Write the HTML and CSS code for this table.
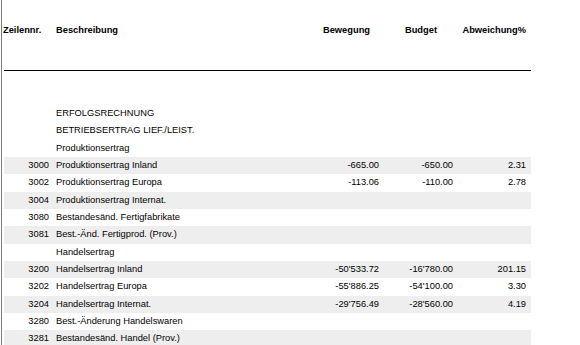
FILE: index.html
```html
<!DOCTYPE html>
<html>
<head>
<meta charset="utf-8">
<link rel="stylesheet" href="styles.css">
</head>
<body>
<div class="page">
  <div class="head">
    <div class="h-num">Zeilennr.</div>
    <div class="h-desc">Beschreibung</div>
    <div class="h-mov">Bewegung</div>
    <div class="h-bud">Budget</div>
    <div class="h-dev">Abweichung%</div>
  </div>
  <div class="rule"></div>
  <div class="rows">
    <div class="row"><span class="num"></span><span class="desc">ERFOLGSRECHNUNG</span><span class="amt"></span><span class="amt"></span><span class="amt"></span></div>
    <div class="row"><span class="num"></span><span class="desc">BETRIEBSERTRAG LIEF./LEIST.</span><span class="amt"></span><span class="amt"></span><span class="amt"></span></div>
    <div class="row"><span class="num"></span><span class="desc">Produktionsertrag</span><span class="amt"></span><span class="amt"></span><span class="amt"></span></div>
    <div class="row alt"><span class="num">3000</span><span class="desc">Produktionsertrag Inland</span><span class="amt">-665.00</span><span class="amt">-650.00</span><span class="amt">2.31</span></div>
    <div class="row"><span class="num">3002</span><span class="desc">Produktionsertrag Europa</span><span class="amt">-113.06</span><span class="amt">-110.00</span><span class="amt">2.78</span></div>
    <div class="row alt"><span class="num">3004</span><span class="desc">Produktionsertrag Internat.</span><span class="amt"></span><span class="amt"></span><span class="amt"></span></div>
    <div class="row"><span class="num">3080</span><span class="desc">Bestandesänd. Fertigfabrikate</span><span class="amt"></span><span class="amt"></span><span class="amt"></span></div>
    <div class="row alt"><span class="num">3081</span><span class="desc">Best.-Änd. Fertigprod. (Prov.)</span><span class="amt"></span><span class="amt"></span><span class="amt"></span></div>
    <div class="row"><span class="num"></span><span class="desc">Handelsertrag</span><span class="amt"></span><span class="amt"></span><span class="amt"></span></div>
    <div class="row alt"><span class="num">3200</span><span class="desc">Handelsertrag Inland</span><span class="amt">-50'533.72</span><span class="amt">-16'780.00</span><span class="amt">201.15</span></div>
    <div class="row"><span class="num">3202</span><span class="desc">Handelsertrag Europa</span><span class="amt">-55'886.25</span><span class="amt">-54'100.00</span><span class="amt">3.30</span></div>
    <div class="row alt"><span class="num">3204</span><span class="desc">Handelsertrag Internat.</span><span class="amt">-29'756.49</span><span class="amt">-28'560.00</span><span class="amt">4.19</span></div>
    <div class="row"><span class="num">3280</span><span class="desc">Best.-Änderung Handelswaren</span><span class="amt"></span><span class="amt"></span><span class="amt"></span></div>
    <div class="row alt"><span class="num">3281</span><span class="desc">Bestandesänd. Handel (Prov.)</span><span class="amt"></span><span class="amt"></span><span class="amt"></span></div>
  </div>
</div>
</body>
</html>
```
FILE: styles.css
```css
html, body {
  margin: 0;
  padding: 0;
  background: #ffffff;
}
body {
  font-family: "Liberation Sans", Arial, sans-serif;
  font-size: 9.3px;
  color: #000000;
  overflow: hidden;
}
.page {
  margin-left: 1px;
  border-left: 1px solid #7a7a7a;
  padding-left: 2px;
  height: 345px;
  width: 527px;
}
.head, .row {
  display: grid;
  grid-template-columns: 45px 250px 80px 74px 73px 5px;
  align-items: center;
}
.head {
  padding-top: 21px;
  height: 17px;
  font-weight: bold;
}
.h-num { margin-left: -1px; white-space: nowrap; }
.h-desc { padding-left: 7px; }
.h-mov { text-align: right; padding-right: 9px; }
.h-bud { text-align: right; padding-right: 16px; }
.h-dev { text-align: right; white-space: nowrap; }
.rule {
  margin-top: 32px;
  height: 1px;
  background: #000000;
}
.rows {
  margin-top: 34px;
}
.row {
  height: 17.33px;
  line-height: 17px;
}
.row.alt {
  background: #eeeeee;
}
.num { text-align: right; }
.desc { padding-left: 7px; white-space: nowrap; }
.amt { text-align: right; }
```
